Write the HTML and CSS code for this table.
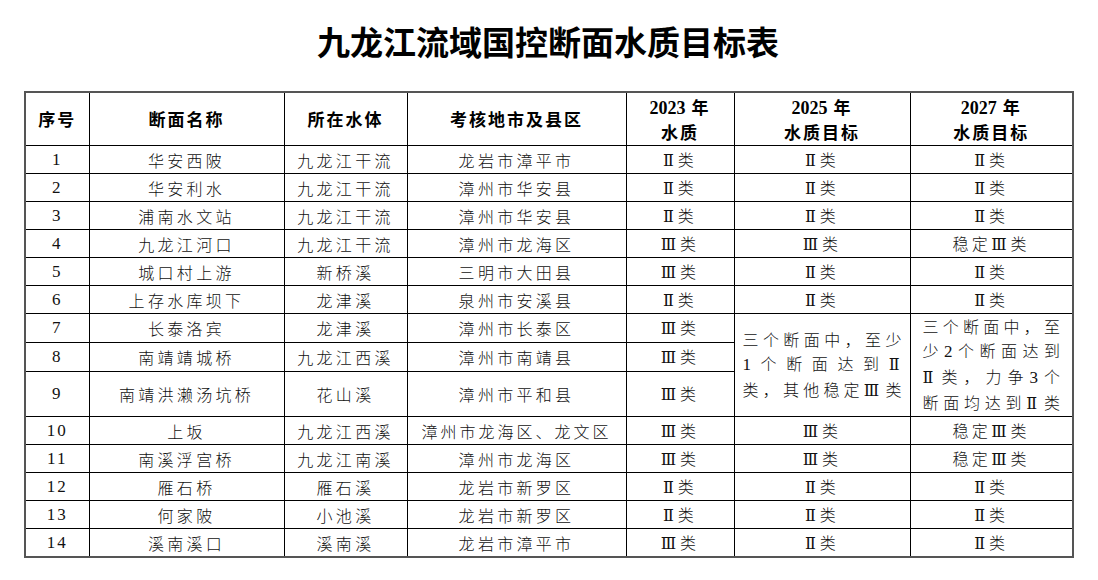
FILE: index.html
```html
<!DOCTYPE html>
<html lang="zh-CN">
<head>
<meta charset="utf-8">
<title>九龙江流域国控断面水质目标表</title>
<link rel="stylesheet" href="styles.css">
</head>
<body>
<div class="page">
  <h1 class="title">九龙江流域国控断面水质目标表</h1>
  <table class="tbl">
    <colgroup>
      <col class="c1"><col class="c2"><col class="c3"><col class="c4"><col class="c5"><col class="c6"><col class="c7">
    </colgroup>
    <thead>
      <tr class="head">
        <th>序号</th>
        <th>断面名称</th>
        <th>所在水体</th>
        <th>考核地市及县区</th>
        <th><span class="hn">2023</span> 年<br>水质</th>
        <th><span class="hn">2025</span> 年<br>水质目标</th>
        <th><span class="hn">2027</span> 年<br>水质目标</th>
      </tr>
    </thead>
    <tbody>
      <tr><td class="num">1</td><td>华安西陂</td><td>九龙江干流</td><td>龙岩市漳平市</td><td><span class="rn">Ⅱ</span>类</td><td><span class="rn">Ⅱ</span>类</td><td><span class="rn">Ⅱ</span>类</td></tr>
      <tr><td class="num">2</td><td>华安利水</td><td>九龙江干流</td><td>漳州市华安县</td><td><span class="rn">Ⅱ</span>类</td><td><span class="rn">Ⅱ</span>类</td><td><span class="rn">Ⅱ</span>类</td></tr>
      <tr><td class="num">3</td><td>浦南水文站</td><td>九龙江干流</td><td>漳州市华安县</td><td><span class="rn">Ⅱ</span>类</td><td><span class="rn">Ⅱ</span>类</td><td><span class="rn">Ⅱ</span>类</td></tr>
      <tr><td class="num">4</td><td>九龙江河口</td><td>九龙江干流</td><td>漳州市龙海区</td><td><span class="rn">Ⅲ</span>类</td><td><span class="rn">Ⅲ</span>类</td><td>稳定<span class="rn">Ⅲ</span>类</td></tr>
      <tr><td class="num">5</td><td>城口村上游</td><td>新桥溪</td><td>三明市大田县</td><td><span class="rn">Ⅲ</span>类</td><td><span class="rn">Ⅱ</span>类</td><td><span class="rn">Ⅱ</span>类</td></tr>
      <tr><td class="num">6</td><td>上存水库坝下</td><td>龙津溪</td><td>泉州市安溪县</td><td><span class="rn">Ⅱ</span>类</td><td><span class="rn">Ⅱ</span>类</td><td><span class="rn">Ⅱ</span>类</td></tr>
      <tr><td class="num">7</td><td>长泰洛宾</td><td>龙津溪</td><td>漳州市长泰区</td><td><span class="rn">Ⅲ</span>类</td>
        <td rowspan="3" class="merged m25">
          <span class="ln">三个断面中，至少</span>
          <span class="ln"><span class="d">1</span>个断面达到<span class="rn">Ⅱ</span></span>
          <span class="ln">类，其他稳定<span class="rn">Ⅲ</span>类</span>
        </td>
        <td rowspan="3" class="merged m27">
          <span class="ln">三个断面中，至</span>
          <span class="ln">少<span class="d">2</span>个断面达到</span>
          <span class="ln"><span class="rn">Ⅱ</span>类，力争<span class="d">3</span>个</span>
          <span class="ln">断面均达到<span class="rn">Ⅱ</span>类</span>
        </td>
      </tr>
      <tr><td class="num">8</td><td>南靖靖城桥</td><td>九龙江西溪</td><td>漳州市南靖县</td><td><span class="rn">Ⅲ</span>类</td></tr>
      <tr class="tall"><td class="num">9</td><td>南靖洪濑汤坑桥</td><td>花山溪</td><td>漳州市平和县</td><td><span class="rn">Ⅲ</span>类</td></tr>
      <tr><td class="num">10</td><td>上坂</td><td>九龙江西溪</td><td class="tight">漳州市龙海区、龙文区</td><td><span class="rn">Ⅲ</span>类</td><td><span class="rn">Ⅲ</span>类</td><td>稳定<span class="rn">Ⅲ</span>类</td></tr>
      <tr><td class="num">11</td><td>南溪浮宫桥</td><td>九龙江南溪</td><td>漳州市龙海区</td><td><span class="rn">Ⅲ</span>类</td><td><span class="rn">Ⅲ</span>类</td><td>稳定<span class="rn">Ⅲ</span>类</td></tr>
      <tr><td class="num">12</td><td>雁石桥</td><td>雁石溪</td><td>龙岩市新罗区</td><td><span class="rn">Ⅱ</span>类</td><td><span class="rn">Ⅱ</span>类</td><td><span class="rn">Ⅱ</span>类</td></tr>
      <tr><td class="num">13</td><td>何家陂</td><td>小池溪</td><td>龙岩市新罗区</td><td><span class="rn">Ⅱ</span>类</td><td><span class="rn">Ⅱ</span>类</td><td><span class="rn">Ⅱ</span>类</td></tr>
      <tr><td class="num">14</td><td>溪南溪口</td><td>溪南溪</td><td>龙岩市漳平市</td><td><span class="rn">Ⅲ</span>类</td><td><span class="rn">Ⅱ</span>类</td><td><span class="rn">Ⅱ</span>类</td></tr>
    </tbody>
  </table>
</div>
</body>
</html>
```

FILE: styles.css
```css
html, body {
  margin: 0;
  padding: 0;
  background: #fff;
}
.page {
  width: 1098px;
  height: 580px;
  padding: 0 0 0 24px;
  box-sizing: border-box;
  font-family: "Noto Sans CJK SC", "Liberation Serif", sans-serif;
  color: #111;
}
.title {
  margin: 0;
  width: 1048px;
  height: 91px;
  padding-top: 18px;
  box-sizing: border-box;
  text-align: center;
  font-size: 33px;
  line-height: 46px;
  font-weight: 700;
  color: #000;
  letter-spacing: 0;
}
.tbl {
  width: 1048px;
  table-layout: fixed;
  border-collapse: collapse;
  border: 2px solid #555;
}
.c1 { width: 64px; }
.c2 { width: 195px; }
.c3 { width: 123px; }
.c4 { width: 219px; }
.c5 { width: 108px; }
.c6 { width: 176px; }
.c7 { width: 163px; }
.tbl th, .tbl td {
  border: 1px solid #000;
  padding: 0;
  text-align: center;
  vertical-align: middle;
}
.head th {
  height: 52px;
  font-size: 17px;
  line-height: 24px;
  font-weight: 700;
  letter-spacing: 2px;
  color: #000;
}
.hn {
  font-family: "Liberation Serif", serif;
  font-weight: 700;
  font-size: 18px;
  letter-spacing: 0;
}
.tbl td {
  height: 27px;
  font-size: 16px;
  line-height: 20px;
  font-weight: 300;
  letter-spacing: 3.3px;
}
.tbl tr.tall td {
  height: 43px;
}
.num {
  font-family: "Liberation Serif", serif;
  font-size: 17px !important;
  letter-spacing: 2px !important;
}
.rn {
  font-family: "Liberation Serif", "DejaVu Serif", serif;
  font-size: 16px;
  letter-spacing: 0;
  margin-right: 4px;
}
.d {
  font-family: "Liberation Serif", serif;
  font-size: 17px;
}
.tight {
  letter-spacing: 3px !important;
}
.merged {
  letter-spacing: 0 !important;
}
.merged .rn {
  margin-right: 2px;
}
.merged .ln {
  display: block;
  text-align: justify;
  text-align-last: justify;
  line-height: 24px;
}
.m25 {
  padding: 0 8px 0 8px !important;
}
.m27 {
  padding: 0 12px 0 12px !important;
}
```
